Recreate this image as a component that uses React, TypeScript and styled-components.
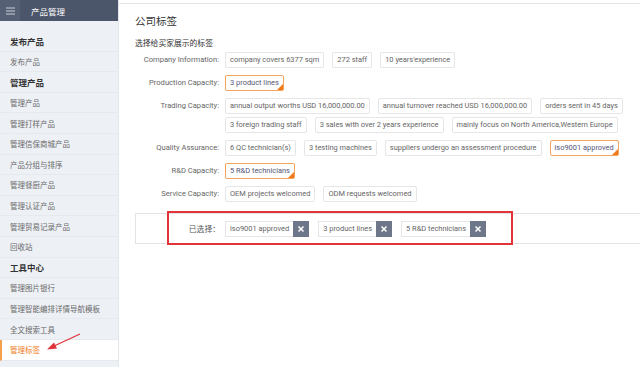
import React from "react";
import styled, { createGlobalStyle } from "styled-components";

const Global = createGlobalStyle`
  html, body { margin: 0; padding: 0; background: #fff; }
  body { font-family: Roboto, "Noto Sans CJK SC", sans-serif; width: 640px; height: 367px; overflow: hidden; }
`;

const Page = styled.div`
  position: relative;
  display: flex;
  width: 640px;
  height: 367px;
  overflow: hidden;
`;

const Sidebar = styled.aside`
  width: 118px;
  flex: none;
  background: #edf0f5;
  border-right: 1px solid #e2e5ea;
  display: flex;
  flex-direction: column;
`;

const SideHead = styled.div`
  height: 21px;
  background: #4c566a;
  display: flex;
  align-items: center;
  color: #fff;
  font-size: 8.5px;
  font-family: "Noto Sans CJK SC", sans-serif;
`;

const MenuBtn = styled.div`
  width: 20px;
  height: 21px;
  display: flex;
  align-items: center;
  justify-content: center;
  background: #566075;
`;

const HeadTitle = styled.span`
  margin-left: 11px;
`;

const SideList = styled.div`
  padding-top: 10px;
  display: flex;
  flex-direction: column;
`;

const SideItem = styled.div<{ $bold?: boolean; $active?: boolean }>`
  height: 20.6px;
  display: flex;
  align-items: center;
  padding-left: ${(p) => (p.$active ? "8px" : "10px")};
  font-family: "Noto Sans CJK SC", sans-serif;
  font-size: ${(p) => (p.$bold ? "8.5px" : "7.5px")};
  font-weight: ${(p) => (p.$bold ? 700 : 400)};
  color: ${(p) => (p.$active ? "#f07a1a" : p.$bold ? "#333" : "#6a6a6a")};
  background: ${(p) => (p.$active ? "#fff" : "transparent")};
  border-left: ${(p) => (p.$active ? "2px solid #f5a04a" : "none")};
  border-bottom: 1px solid #e6e9ee;
  box-sizing: border-box;
`;

const Main = styled.main`
  flex: 1;
  border-top: 1px solid #e4e4e4;
  margin-top: 3px;
  padding: 10px 0 0 16px;
  display: flex;
  flex-direction: column;
`;

const Title = styled.h1`
  margin: 0;
  font-family: "Noto Sans CJK SC", sans-serif;
  font-weight: 400;
  font-size: 10.5px;
  color: #333;
  line-height: 14px;
`;

const SubTitle = styled.div`
  margin-top: 9px;
  font-family: "Noto Sans CJK SC", sans-serif;
  font-size: 7.8px;
  color: #333;
  line-height: 12px;
`;

const Rows = styled.div`
  margin-top: 3px;
  display: flex;
  flex-direction: column;
  gap: 7px;
`;

const Row = styled.div`
  display: flex;
  align-items: flex-start;
`;

const Label = styled.div`
  width: 84px;
  flex: none;
  text-align: right;
  font-size: 7.6px;
  color: #666;
  line-height: 16px;
  margin-right: 6px;
  white-space: nowrap;
`;

const Tags = styled.div`
  display: flex;
  flex-wrap: wrap;
  gap: 3px 8px;
  flex: 1;
`;

const Tag = styled.span<{ $sel?: boolean }>`
  position: relative;
  height: 16px;
  box-sizing: border-box;
  padding: 0 4px;
  border: 1px solid ${(p) => (p.$sel ? "#f5a460" : "#e6e6e6")};
  border-radius: 2px;
  font-size: 7.45px;
  line-height: 14px;
  color: ${(p) => (p.$sel ? "#557" : "#666")};
  white-space: nowrap;
  background: #fff;
  &::after {
    content: "";
    display: ${(p) => (p.$sel ? "block" : "none")};
    position: absolute;
    right: 0;
    bottom: 0;
    width: 0;
    height: 0;
    border-left: 6px solid transparent;
    border-bottom: 6px solid #f07a1a;
  }
`;

const SelectedBox = styled.div`
  margin-top: 11px;
  height: 31px;
  border: 1px solid #e4e4e4;
  border-right: none;
  display: flex;
  align-items: center;
  box-sizing: border-box;
`;

const SelLabel = styled.div`
  width: 84px;
  flex: none;
  text-align: right;
  margin-right: 5px;
  font-family: "Noto Sans CJK SC", sans-serif;
  font-size: 7.8px;
  color: #555;
`;

const SelList = styled.div`
  display: flex;
  gap: 9px;
`;

const SelTag = styled.div`
  display: flex;
  height: 16px;
`;

const SelText = styled.span`
  height: 16px;
  box-sizing: border-box;
  padding: 0 4px;
  border: 1px solid #e6e6e6;
  border-right: none;
  font-size: 7.45px;
  line-height: 14px;
  color: #666;
  white-space: nowrap;
`;

const Close = styled.span`
  width: 16px;
  height: 16px;
  background: #6d7789;
  color: #fff;
  display: flex;
  align-items: center;
  justify-content: center;
`;

const RedBox = styled.div`
  position: absolute;
  left: 167px;
  top: 211px;
  width: 346px;
  height: 34px;
  border: 2px solid #e0333a;
  box-sizing: border-box;
`;

const Arrow = styled.svg`
  position: absolute;
  left: 44px;
  top: 332px;
`;

const side: { t: string; b?: boolean; a?: boolean }[] = [
  { t: "发布产品", b: true },
  { t: "发布产品" },
  { t: "管理产品", b: true },
  { t: "管理产品" },
  { t: "管理打样产品" },
  { t: "管理信保商城产品" },
  { t: "产品分组与排序" },
  { t: "管理餐厨产品" },
  { t: "管理认证产品" },
  { t: "管理贸易记录产品" },
  { t: "回收站" },
  { t: "工具中心", b: true },
  { t: "管理图片银行" },
  { t: "管理智能编排详情导航模板" },
  { t: "全文搜索工具" },
  { t: "管理标签", a: true },
];

const rows: { label: string; tags: { t: string; s?: boolean }[] }[] = [
  {
    label: "Company Information:",
    tags: [{ t: "company covers 6377 sqm" }, { t: "272 staff" }, { t: "10 years'experience" }],
  },
  { label: "Production Capacity:", tags: [{ t: "3 product lines", s: true }] },
  {
    label: "Trading Capacity:",
    tags: [
      { t: "annual output worths USD 16,000,000.00" },
      { t: "annual turnover reached USD 16,000,000.00" },
      { t: "orders sent in 45 days" },
      { t: "3 foreign trading staff" },
      { t: "3 sales with over 2 years experience" },
      { t: "mainly focus on North America,Western Europe" },
    ],
  },
  {
    label: "Quality Assurance:",
    tags: [
      { t: "6 QC technician(s)" },
      { t: "3 testing machines" },
      { t: "suppliers undergo an assessment procedure" },
      { t: "iso9001 approved", s: true },
    ],
  },
  { label: "R&D Capacity:", tags: [{ t: "5 R&D technicians", s: true }] },
  { label: "Service Capacity:", tags: [{ t: "OEM projects welcomed" }, { t: "ODM requests welcomed" }] },
];

const X = () => (
  <svg width="8" height="8" viewBox="0 0 8 8">
    <path d="M1.5 1.5 L6.5 6.5 M6.5 1.5 L1.5 6.5" stroke="#fff" strokeWidth="1.5" />
  </svg>
);

export default function App() {
  return (
    <Page>
      <Global />
      <Sidebar>
        <SideHead>
          <MenuBtn>
            <svg width="9" height="8" viewBox="0 0 9 8">
              <path d="M0 1h9M0 4h9M0 7h9" stroke="#c8cdd8" strokeWidth="1" />
            </svg>
          </MenuBtn>
          <HeadTitle>产品管理</HeadTitle>
        </SideHead>
        <SideList>
          {side.map((s, i) => (
            <SideItem key={i} $bold={s.b} $active={s.a}>
              {s.t}
            </SideItem>
          ))}
        </SideList>
      </Sidebar>
      <Main>
        <Title>公司标签</Title>
        <SubTitle>选择给买家展示的标签</SubTitle>
        <Rows>
          {rows.map((r) => (
            <Row key={r.label}>
              <Label>{r.label}</Label>
              <Tags>
                {r.tags.map((t) => (
                  <Tag key={t.t} $sel={t.s}>
                    {t.t}
                  </Tag>
                ))}
              </Tags>
            </Row>
          ))}
        </Rows>
        <SelectedBox>
          <SelLabel>已选择：</SelLabel>
          <SelList>
            {["iso9001 approved", "3 product lines", "5 R&D technicians"].map((t) => (
              <SelTag key={t}>
                <SelText>{t}</SelText>
                <Close>
                  <X />
                </Close>
              </SelTag>
            ))}
          </SelList>
        </SelectedBox>
      </Main>
      <RedBox />
      <Arrow width="40" height="22" viewBox="0 0 40 22">
        <path d="M36 2 L10 14" stroke="#e0333a" strokeWidth="1.3" />
        <path d="M3 17.5 L10 10.5 L13 16.5 Z" fill="#e0333a" />
      </Arrow>
    </Page>
  );
}
